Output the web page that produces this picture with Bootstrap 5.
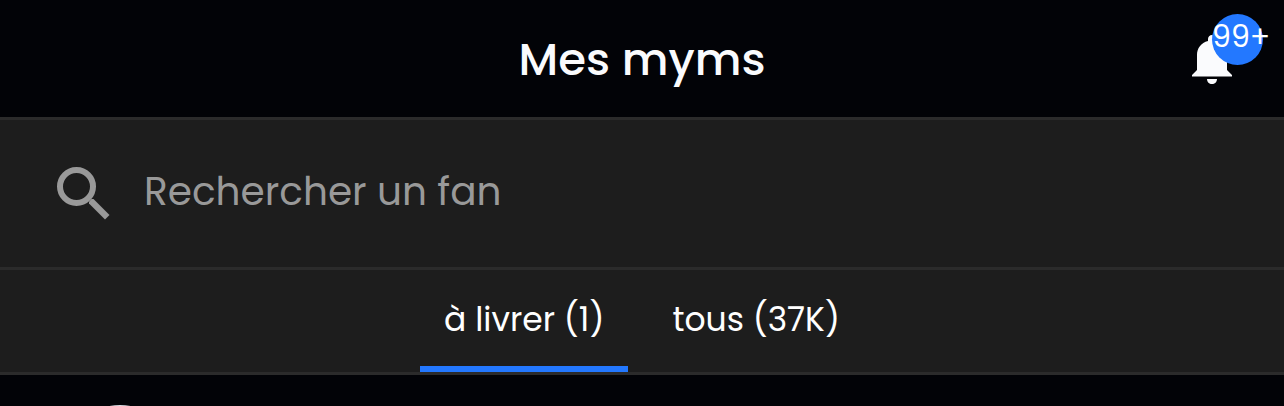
<!DOCTYPE html>
<html lang="fr">
<head>
<meta charset="utf-8">
<meta name="viewport" content="width=device-width, initial-scale=1">
<title>Mes myms</title>
<link href="https://cdn.jsdelivr.net/npm/bootstrap@5.3.0/dist/css/bootstrap.min.css" rel="stylesheet">
<style>
  body { background: #020307; color: #fff; font-family: Poppins, Inter, "Open Sans", sans-serif; }
  .line-below { border-bottom: 3px solid #2b2b2b; }
  .topbar { height: 120px; padding-top: 2px; }
  .topbar h1 { font-size: 45px; line-height: 60px; font-weight: 500; color: #fafbfd; }
  .panel { background: #1d1d1d; }
  .bell { right: 52px; top: 35px; line-height: 0; }
  .bell-count { left: 20px; top: -21px; width: 51px; height: 51px; background: #2378ff; font-size: 30px; line-height: 46px; }
  .search { height: 150px; padding-left: 56px; gap: 34px; }
  .search .form-control, .search .form-control:focus { font-size: 39px; line-height: 56px; padding: 0 0 4px; color: #fff; box-shadow: none; }
  .search .form-control::placeholder { color: #999; opacity: 1; }
  .tabs { height: 105px; gap: 20px; }
  .tabs a { color: #fff; font-size: 33px; line-height: 92px; padding: 4px 24px 0; border-bottom: 6px solid transparent; }
  .tabs a.active { border-color: #2378ff; }
  .avatar { width: 112px; height: 112px; margin: 30px 0 0 64px; background: #d5d9df; }
</style>
</head>
<body>
<div class="vh-100 d-flex flex-column overflow-hidden">
  <header class="topbar line-below position-relative d-flex flex-shrink-0 align-items-center justify-content-center">
    <h1 class="m-0">Mes myms</h1>
    <button type="button" class="bell btn p-0 border-0 position-absolute" aria-label="Notifications">
      <svg width="40" height="49" viewBox="0 0 40 49" fill="#fafbfd" aria-hidden="true">
        <path d="M20 0c-2.400 0-4 1.700-4 4v2C9 7.500 5 13.500 5 20v15L0 40v1.500h40V40l-5-5V20C35 13.500 31 7.500 24 6V4c0-2.300-1.600-4-4-4zM15 44h10c0 3-2.200 5-5 5s-5-2-5-5z"/>
      </svg>
      <span class="bell-count position-absolute rounded-circle d-flex justify-content-start text-white">99+</span>
    </button>
  </header>
  <form class="search panel line-below d-flex flex-shrink-0 align-items-center" role="search">
    <label for="fan" class="lh-1">
      <svg class="d-block" width="54" height="54" viewBox="0 0 54 54" fill="#999" aria-hidden="true">
        <circle cx="20.500" cy="19.500" r="16.500" fill="none" stroke="#999" stroke-width="6"/>
        <path d="M33 36.500v-2l2.500-2.500h2L53.500 48l-4.500 4.500z"/>
      </svg>
    </label>
    <input id="fan" type="text" class="form-control bg-transparent border-0" placeholder="Rechercher un fan" aria-label="Rechercher un fan">
  </form>
  <nav class="tabs panel line-below d-flex flex-shrink-0 justify-content-center">
    <a href="#" class="active text-decoration-none" aria-current="page">à livrer (1)</a>
    <a href="#" class="text-decoration-none">tous (37K)</a>
  </nav>
  <main class="flex-grow-1 overflow-hidden">
    <div class="avatar rounded-circle"></div>
  </main>
</div>
<script src="https://cdn.jsdelivr.net/npm/bootstrap@5.3.0/dist/js/bootstrap.bundle.min.js"></script>
</body>
</html>
